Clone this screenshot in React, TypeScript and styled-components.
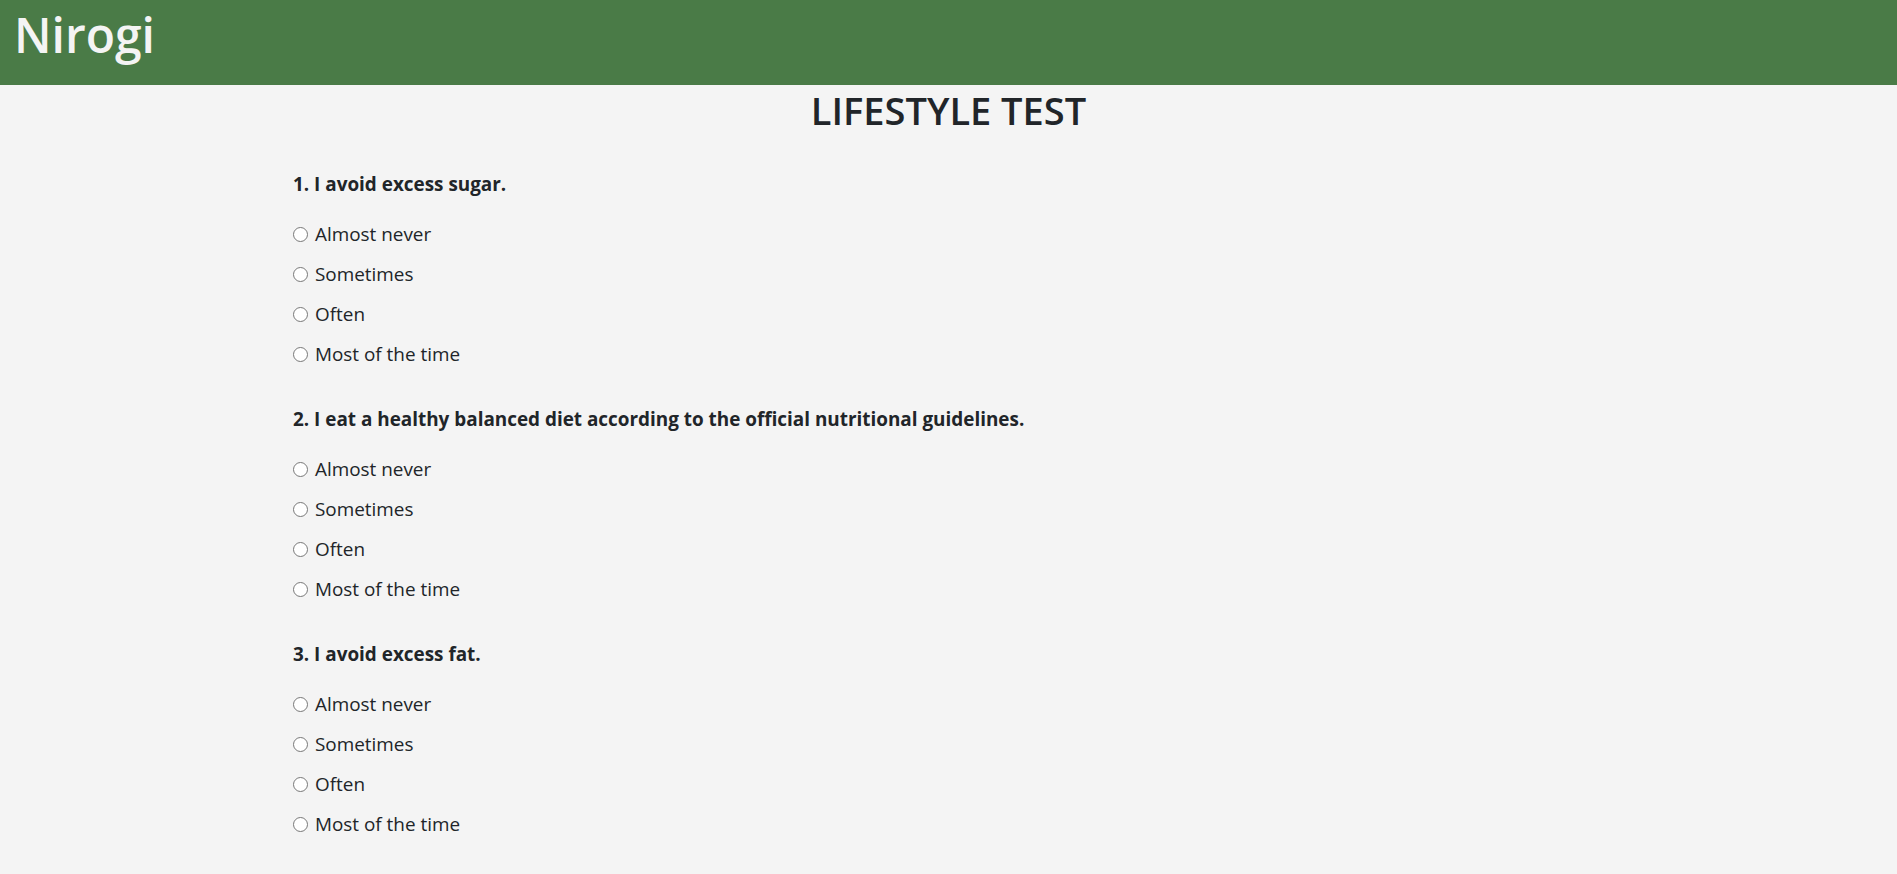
import React from "react";
import styled, { createGlobalStyle } from "styled-components";

const Global = createGlobalStyle`
  html, body { margin: 0; padding: 0; }
  body {
    background: #f4f4f4;
    color: #212529;
    font-family: "Open Sans", "Noto Sans", "Liberation Sans", sans-serif;
  }
`;

const Header = styled.header`
  height: 85px;
  background: #4a7b47;
  display: flex;
  align-items: center;
  padding-left: 14px;
`;

const Brand = styled.div`
  color: #f4f4f4;
  font-size: 48px;
  font-weight: 600;
  line-height: 1;
  margin-top: -16px;
`;

const Title = styled.h1`
  margin: 1px 0 0;
  text-align: center;
  font-size: 38px;
  font-weight: 600;
  line-height: 48px;
  color: #212529;
`;

const Form = styled.form`
  padding: 38px 0 0 293px;
`;

const Question = styled.fieldset`
  border: 0;
  margin: 0 0 41px;
  padding: 0;
`;

const Prompt = styled.legend`
  padding: 0;
  font-size: 18.9px;
  font-weight: 700;
  line-height: 24px;
  margin-bottom: 26px;
`;

const Options = styled.div`
  display: flex;
  flex-direction: column;
  gap: 16px;
`;

const Option = styled.label`
  display: flex;
  align-items: center;
  gap: 7px;
  font-size: 18.9px;
  line-height: 24px;
  color: #212529;
`;

const Radio = styled.input`
  margin: 0;
  width: 15px;
  height: 15px;
`;

const questions = [
  "1. I avoid excess sugar.",
  "2. I eat a healthy balanced diet according to the official nutritional guidelines.",
  "3. I avoid excess fat.",
];

const answers = ["Almost never", "Sometimes", "Often", "Most of the time"];

export default function App() {
  return (
    <>
      <Global />
      <Header>
        <Brand>Nirogi</Brand>
      </Header>
      <Title>LIFESTYLE TEST</Title>
      <Form>
        {questions.map((q, qi) => (
          <Question key={qi}>
            <Prompt>{q}</Prompt>
            <Options>
              {answers.map((a) => (
                <Option key={a}>
                  <Radio type="radio" name={`q${qi}`} value={a} />
                  {a}
                </Option>
              ))}
            </Options>
          </Question>
        ))}
      </Form>
    </>
  );
}
